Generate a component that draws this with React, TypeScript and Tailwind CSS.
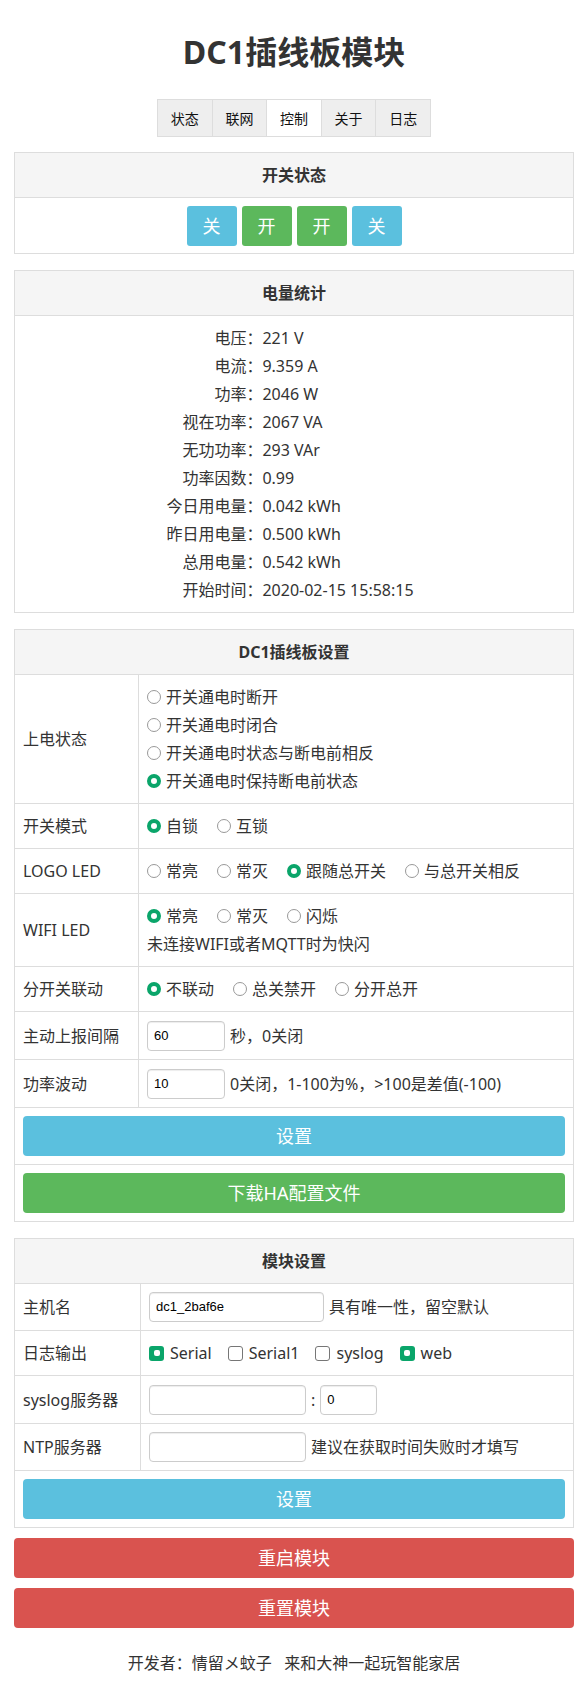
import React from "react";

const FONT = "font-['Noto_Sans','Noto_Sans_CJK_SC',sans-serif]";

function Radio({ checked }: { checked?: boolean }) {
  return checked ? (
    <span className="inline-block w-[14px] h-[14px] rounded-full border-[4px] border-[#0aa56a] bg-white shrink-0" />
  ) : (
    <span className="inline-block w-[14px] h-[14px] rounded-full border border-[#999] bg-white shrink-0" />
  );
}

function Check({ checked }: { checked?: boolean }) {
  return checked ? (
    <span className="inline-flex items-center justify-center w-[15px] h-[15px] rounded-[3px] bg-[#0aa56a] shrink-0">
      <span className="w-[6px] h-[6px] rounded-[2px] bg-white" />
    </span>
  ) : (
    <span className="inline-block w-[15px] h-[15px] rounded-[3px] border border-[#767676] bg-white shrink-0" />
  );
}

function RadioOpt({ label, checked }: { label: string; checked?: boolean }) {
  return (
    <span className="inline-flex items-center gap-[5px]">
      <Radio checked={checked} />
      <span>{label}</span>
    </span>
  );
}

function CheckOpt({ label, checked }: { label: string; checked?: boolean }) {
  return (
    <span className="inline-flex items-center gap-[6px]">
      <Check checked={checked} />
      <span>{label}</span>
    </span>
  );
}

function Input({ value, w }: { value?: string; w: string }) {
  return (
    <span
      className={`inline-flex items-center h-[30px] ${w} border border-[#ccc] rounded-[4px] shadow-[inset_0_1px_1px_rgba(0,0,0,0.075)] pl-[6px] text-[13px] text-black font-['Liberation_Sans',Arial,sans-serif] bg-white shrink-0`}
    >
      {value}
    </span>
  );
}

function Card({ title, children }: { title: string; children: React.ReactNode }) {
  return (
    <div className="mx-[14px] border border-[#ddd] bg-white">
      <div className="h-[44px] bg-[#f5f5f5] flex items-center justify-center font-bold text-[16px] text-[#333]">
        {title}
      </div>
      {children}
    </div>
  );
}

function Row({ label, lw, children }: { label: string; lw: string; children: React.ReactNode }) {
  return (
    <div className="flex border-t border-[#ddd]">
      <div className={`${lw} shrink-0 border-r border-[#ddd] px-2 py-2 flex items-center`}>{label}</div>
      <div className="flex-1 px-2 py-2 leading-[28px] min-h-[28px]">{children}</div>
    </div>
  );
}

function BtnRow({ children, color }: { children: React.ReactNode; color: string }) {
  return (
    <div className="border-t border-[#ddd] p-2">
      <div className={`h-[40px] rounded-[4px] ${color} flex items-center justify-center text-white text-[18px]`}>
        {children}
      </div>
    </div>
  );
}

export default function App() {
  const stats: [string, string][] = [
    ["电压：", "221 V"],
    ["电流：", "9.359 A"],
    ["功率：", "2046 W"],
    ["视在功率：", "2067 VA"],
    ["无功功率：", "293 VAr"],
    ["功率因数：", "0.99"],
    ["今日用电量：", "0.042 kWh"],
    ["昨日用电量：", "0.500 kWh"],
    ["总用电量：", "0.542 kWh"],
    ["开始时间：", "2020-02-15 15:58:15"],
  ];
  const tabs = ["状态", "联网", "控制", "关于", "日志"];
  return (
    <div className={`${FONT} text-[#333] text-[16px] bg-white w-full pt-[34px] pb-[9px]`}>
      <h1 className="text-center text-[32px] font-bold leading-[35px]">DC1插线板模块</h1>

      <div className="flex justify-center mt-[30px]">
        <div className="flex border-l border-t border-b border-[#ddd]">
          {tabs.map((t) => (
            <div
              key={t}
              className={`w-[54.6px] h-[36px] border-r border-[#ddd] flex items-center justify-center text-[14px] text-[#111] ${
                t === "控制" ? "bg-white" : "bg-[#eee]"
              }`}
            >
              {t}
            </div>
          ))}
        </div>
      </div>

      <div className="mt-[15px] flex flex-col gap-[16px]">
        <Card title="开关状态">
          <div className="border-t border-[#ddd] pt-2 pb-[7px] flex justify-center gap-[5px]">
            {[
              ["关", "bg-[#5bc0de]"],
              ["开", "bg-[#5cb85c]"],
              ["开", "bg-[#5cb85c]"],
              ["关", "bg-[#5bc0de]"],
            ].map(([t, c], i) => (
              <div key={i} className={`w-[50px] h-[40px] rounded-[3px] ${c} flex items-center justify-center text-white text-[18px]`}>
                {t}
              </div>
            ))}
          </div>
        </Card>

        <Card title="电量统计">
          <div className="border-t border-[#ddd] py-2 flex justify-center pr-[8px]">
            <div className="grid grid-cols-[auto_auto] leading-[28px]">
              {stats.map(([k, v]) => (
                <React.Fragment key={k}>
                  <div className="text-right">{k}</div>
                  <div className="text-left">{v}</div>
                </React.Fragment>
              ))}
            </div>
          </div>
        </Card>

        <Card title="DC1插线板设置">
          <Row label="上电状态" lw="w-[124px]">
            <div className="flex flex-col">
              <RadioOpt label="开关通电时断开" />
              <RadioOpt label="开关通电时闭合" />
              <RadioOpt label="开关通电时状态与断电前相反" />
              <RadioOpt label="开关通电时保持断电前状态" checked />
            </div>
          </Row>
          <Row label="开关模式" lw="w-[124px]">
            <div className="flex gap-x-[19px]">
              <RadioOpt label="自锁" checked />
              <RadioOpt label="互锁" />
            </div>
          </Row>
          <Row label="LOGO LED" lw="w-[124px]">
            <div className="flex gap-x-[19px]">
              <RadioOpt label="常亮" />
              <RadioOpt label="常灭" />
              <RadioOpt label="跟随总开关" checked />
              <RadioOpt label="与总开关相反" />
            </div>
          </Row>
          <Row label="WIFI LED" lw="w-[124px]">
            <div className="flex gap-x-[19px]">
              <RadioOpt label="常亮" checked />
              <RadioOpt label="常灭" />
              <RadioOpt label="闪烁" />
            </div>
            <div>未连接WIFI或者MQTT时为快闪</div>
          </Row>
          <Row label="分开关联动" lw="w-[124px]">
            <div className="flex gap-x-[19px]">
              <RadioOpt label="不联动" checked />
              <RadioOpt label="总关禁开" />
              <RadioOpt label="分开总开" />
            </div>
          </Row>
          <Row label="主动上报间隔" lw="w-[124px]">
            <div className="flex items-center gap-[5px] h-[31px]">
              <Input value="60" w="w-[78px]" />
              <span>秒，0关闭</span>
            </div>
          </Row>
          <Row label="功率波动" lw="w-[124px]">
            <div className="flex items-center gap-[5px] h-[31px]">
              <Input value="10" w="w-[78px]" />
              <span className="whitespace-nowrap">0关闭，1-100为%，&gt;100是差值(-100)</span>
            </div>
          </Row>
          <BtnRow color="bg-[#5bc0de]">设置</BtnRow>
          <BtnRow color="bg-[#5cb85c]">下载HA配置文件</BtnRow>
        </Card>

        <Card title="模块设置">
          <Row label="主机名" lw="w-[126px]">
            <div className="flex items-center gap-[5px] h-[30px]">
              <Input value="dc1_2baf6e" w="w-[175px]" />
              <span>具有唯一性，留空默认</span>
            </div>
          </Row>
          <Row label="日志输出" lw="w-[126px]">
            <div className="flex gap-x-[16px]">
              <CheckOpt label="Serial" checked />
              <CheckOpt label="Serial1" />
              <CheckOpt label="syslog" />
              <CheckOpt label="web" checked />
            </div>
          </Row>
          <Row label="syslog服务器" lw="w-[126px]">
            <div className="flex items-center h-[31px]">
              <Input w="w-[157px]" />
              <span className="mx-[5px]">:</span>
              <Input value="0" w="w-[57px]" />
            </div>
          </Row>
          <Row label="NTP服务器" lw="w-[126px]">
            <div className="flex items-center gap-[5px] h-[30px]">
              <Input w="w-[157px]" />
              <span>建议在获取时间失败时才填写</span>
            </div>
          </Row>
          <BtnRow color="bg-[#5bc0de]">设置</BtnRow>
        </Card>
      </div>

      <div className="mx-[14px] mt-[10px] flex flex-col gap-[10px]">
        <div className="h-[40px] rounded-[4px] bg-[#d9534f] flex items-center justify-center text-white text-[18px]">重启模块</div>
        <div className="h-[40px] rounded-[4px] bg-[#d9534f] flex items-center justify-center text-white text-[18px]">重置模块</div>
      </div>

      <div className="text-center mt-[23px] leading-[24px] whitespace-pre">开发者：情留メ蚊子   来和大神一起玩智能家居</div>
    </div>
  );
}
